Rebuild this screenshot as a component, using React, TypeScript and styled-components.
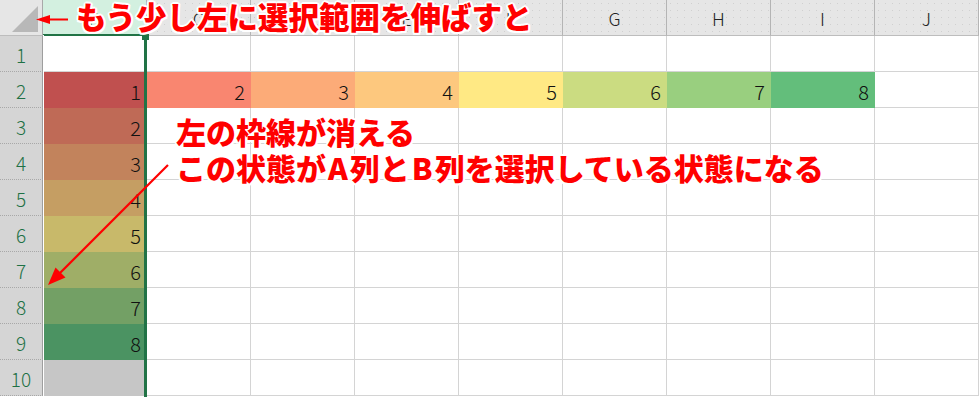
import React from 'react';
import styled, { createGlobalStyle } from 'styled-components';

const GlobalStyle = createGlobalStyle`
  html, body {
    margin: 0;
    padding: 0;
    background: #fff;
    overflow: hidden;
  }
`;

const GREEN = '#217346';
const RED = '#ff0000';

const COLUMNS = ['B', 'C', 'D', 'E', 'F', 'G', 'H', 'I', 'J'];

/** conditional format colours, value -> fill */
const scale: Record<number, string> = {
  2: '#f98670',
  3: '#fcab78',
  4: '#fdc87e',
  5: '#ffe984',
  6: '#cbdc81',
  7: '#99cf7f',
  8: '#63be7b'
};

/** same colours darkened by the selection overlay (column B) */
const selectedScale: Record<number, string> = {
  1: '#c0504f',
  2: '#bf6a56',
  3: '#c2835c',
  4: '#c59e63',
  5: '#c8b96a',
  6: '#9fae67',
  7: '#73a065',
  8: '#4b9362'
};

const Sheet = styled.div`
  position: relative;
  width: 979px;
  height: 397px;
  overflow: hidden;
  display: grid;
  grid-template-columns: 43px repeat(8, 104px) 104px;
  grid-template-rows: 36px repeat(10, 36px);
  font-family: 'Noto Sans CJK JP', 'Noto Sans', sans-serif;
`;

const Corner = styled.div`
  position: relative;
  background: #e6e6e6;
  border-right: 1px solid #a9a9a9;
  border-bottom: 1px solid #bdbdbd;
  box-sizing: border-box;

  &::after {
    content: '';
    position: absolute;
    right: 4px;
    bottom: 3px;
    width: 0;
    height: 0;
    border-left: 26px solid transparent;
    border-bottom: 26px solid #b8b8b8;
  }
`;

const ColHeader = styled.div<{ $selected?: boolean }>`
  display: flex;
  align-items: center;
  justify-content: center;
  box-sizing: border-box;
  background-color: ${({ $selected }) => ($selected ? '#d3f0e0' : '#e6e6e6')};
  background-image: ${({ $selected }) =>
    $selected
      ? 'none'
      : 'radial-gradient(circle, #d0d0d0 0.7px, transparent 0.9px)'};
  background-size: 7px 7px;
  border-right: 1px solid #b4b4b4;
  border-bottom: ${({ $selected }) =>
    $selected ? `2px solid ${GREEN}` : '1px solid #bdbdbd'};
  color: ${({ $selected }) => ($selected ? GREEN : '#222')};
  font-size: 18px;
  font-weight: 300;
  padding-top: 1px;
`;

const RowHeader = styled.div`
  display: flex;
  align-items: center;
  justify-content: center;
  box-sizing: border-box;
  background: #d5d5d5;
  border-right: 1px solid #9e9e9e;
  border-bottom: 1px dotted #a8a8a8;
  color: #1e7145;
  font-size: 19px;
  font-weight: 300;
  padding-top: 2px;
`;

const Cell = styled.div<{ $fill?: string }>`
  display: flex;
  align-items: center;
  justify-content: flex-end;
  box-sizing: border-box;
  padding: 3px 5px 0 0;
  background: ${({ $fill }) => $fill || '#fff'};
  border-right: 1px solid ${({ $fill }) => ($fill ? 'transparent' : '#d4d4d4')};
  border-bottom: 1px solid ${({ $fill }) => ($fill ? 'transparent' : '#d4d4d4')};
  color: #111;
  font-size: 20px;
  font-weight: 300;
`;

const SelectionFrame = styled.div`
  position: absolute;
  left: 43px;
  top: 35px;
  width: 104px;
  bottom: 0;
  box-sizing: border-box;
  border-left: 1px solid #fff;
  border-right: 3px solid ${GREEN};
  pointer-events: none;

  &::after {
    content: '';
    position: absolute;
    right: -5px;
    top: -1px;
    width: 7px;
    height: 6px;
    background: ${GREEN};
  }
`;

const Callout = styled.div<{ $top: number; $left: number; $size: number }>`
  position: absolute;
  top: ${({ $top }) => $top}px;
  left: ${({ $left }) => $left}px;
  font-family: 'Noto Sans CJK JP', sans-serif;
  font-weight: 900;
  font-size: ${({ $size }) => $size}px;
  line-height: 1.2;
  color: ${RED};
  white-space: nowrap;
  text-shadow:
    2px 0 #fff, -2px 0 #fff, 0 2px #fff, 0 -2px #fff,
    1.5px 1.5px #fff, -1.5px 1.5px #fff, 1.5px -1.5px #fff, -1.5px -1.5px #fff;
`;

/* latin letters in the callout are set a little wider */
const Latin = styled.span`
  padding: 0 2px;
`;

const ArrowSvg = styled.svg<{ $top: number; $left: number }>`
  position: absolute;
  top: ${({ $top }) => $top}px;
  left: ${({ $left }) => $left}px;
  overflow: visible;
  pointer-events: none;
`;

const cellFill = (row: number, col: string): { fill?: string; value?: number } => {
  if (col === 'B') {
    if (row === 1) return {};
    if (row === 10) return { fill: '#c6c6c6' };
    return { fill: selectedScale[row - 1], value: row - 1 };
  }
  if (row === 2) {
    const idx = COLUMNS.indexOf(col);
    if (idx >= 1 && idx <= 7) return { fill: scale[idx + 1], value: idx + 1 };
  }
  return {};
};

const App: React.FC = () => {
  const rows = Array.from({ length: 10 }, (_, i) => i + 1);

  return (
    <>
      <GlobalStyle />
      <Sheet>
        <Corner />
        {COLUMNS.map((c) => (
          <ColHeader key={c} $selected={c === 'B'}>
            {c}
          </ColHeader>
        ))}
        {rows.map((r) => (
          <React.Fragment key={r}>
            <RowHeader>{r}</RowHeader>
            {COLUMNS.map((c) => {
              const { fill, value } = cellFill(r, c);
              return (
                <Cell key={c} $fill={fill}>
                  {value}
                </Cell>
              );
            })}
          </React.Fragment>
        ))}

        <SelectionFrame />

        <ArrowSvg $top={10} $left={34} width={38} height={20} viewBox="34 10 38 20">
          <line x1={46} y1={19.5} x2={68} y2={19.5} stroke={RED} strokeWidth={2} />
          <polygon points="36,19.5 50,15 50,24" fill={RED} />
        </ArrowSvg>
        <Callout $top={-2} $left={76} $size={30.5}>
          もう少し左に選択範囲を伸ばすと
        </Callout>

        <Callout $top={113} $left={176} $size={30}>
          左の枠線が消える
          <br />
          この状態が<Latin>A</Latin>列と<Latin>B</Latin>列を選択している状態になる
        </Callout>
        <ArrowSvg $top={155} $left={40} width={140} height={140} viewBox="40 155 140 140">
          <line x1={168} y1={165} x2={58} y2={275} stroke={RED} strokeWidth={2.2} />
          <polygon points="48,285 65.5,277.5 55.5,267.5" fill={RED} />
        </ArrowSvg>
      </Sheet>
    </>
  );
};

export default App;
